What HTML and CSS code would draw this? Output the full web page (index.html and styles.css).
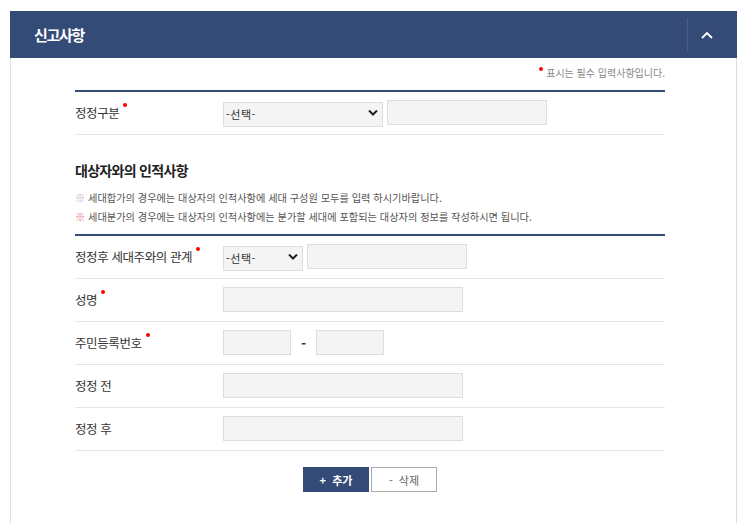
FILE: index.html
```html
<!DOCTYPE html>
<html lang="ko">
<head>
    <meta charset="UTF-8">
    <meta name="viewport" content="width=device-width, initial-scale=1.0">
    <title>신고사항</title>
    <link rel="stylesheet" href="styles.css">
</head>
<body>
    <div class="panel">
        <div class="panel-header">
            <h2>신고사항</h2>
            <button class="toggle-btn" type="button" aria-label="접기">
                <svg width="12" height="8" viewBox="0 0 12 8"><path d="M1 7 L6 2 L11 7" fill="none" stroke="#fff" stroke-width="1.8"/></svg>
            </button>
        </div>
        <div class="panel-body">
            <p class="required-info"><span class="req-dot"></span> 표시는 필수 입력사항입니다.</p>

            <div class="form-table">
                <div class="form-row">
                    <div class="form-label">정정구분<span class="req"></span></div>
                    <div class="form-field">
                        <div class="select-wrap w160">
                            <select><option>-선택-</option></select>
                            <svg class="arrow" width="10" height="7" viewBox="0 0 10 7"><path d="M1 1.5 L5 5.5 L9 1.5" fill="none" stroke="#222" stroke-width="2"/></svg>
                        </div>
                        <input type="text" class="input w160">
                    </div>
                </div>
            </div>

            <h3 class="section-title">대상자와의 인적사항</h3>
            <p class="guide"><span class="mark gray">※</span> 세대합가의 경우에는 대상자의 인적사항에 세대 구성원 모두를 입력 하시기바랍니다.</p>
            <p class="guide"><span class="mark">※</span> 세대분가의 경우에는 대상자의 인적사항에는 분가할 세대에 포함되는 대상자의 정보를 작성하시면 됩니다.</p>

            <div class="form-table">
                <div class="form-row">
                    <div class="form-label">정정후 세대주와의 관계<span class="req"></span></div>
                    <div class="form-field">
                        <div class="select-wrap w80">
                            <select><option>-선택-</option></select>
                            <svg class="arrow" width="10" height="7" viewBox="0 0 10 7"><path d="M1 1.5 L5 5.5 L9 1.5" fill="none" stroke="#222" stroke-width="2"/></svg>
                        </div>
                        <input type="text" class="input w160">
                    </div>
                </div>
                <div class="form-row">
                    <div class="form-label">성명<span class="req"></span></div>
                    <div class="form-field">
                        <input type="text" class="input w240">
                    </div>
                </div>
                <div class="form-row">
                    <div class="form-label">주민등록번호<span class="req"></span></div>
                    <div class="form-field">
                        <input type="text" class="input w68">
                        <span class="dash">-</span>
                        <input type="text" class="input w68">
                    </div>
                </div>
                <div class="form-row">
                    <div class="form-label">정정 전</div>
                    <div class="form-field">
                        <input type="text" class="input w240">
                    </div>
                </div>
                <div class="form-row">
                    <div class="form-label">정정 후</div>
                    <div class="form-field">
                        <input type="text" class="input w240">
                    </div>
                </div>
            </div>

            <div class="btn-area">
                <button type="button" class="btn btn-add">+&nbsp;&nbsp;추가</button>
                <button type="button" class="btn btn-del">-&nbsp;&nbsp;삭제</button>
            </div>
        </div>
    </div>
</body>
</html>
```

FILE: styles.css
```css
body {
    margin: 0;
    background: #fff;
    font-family: "Noto Sans CJK KR", "Noto Sans", sans-serif;
    color: #333;
}

.panel {
    margin: 11px 10px 0;
}

.panel-header {
    display: flex;
    align-items: center;
    justify-content: space-between;
    height: 47px;
    background: #344b77;
    padding-left: 24px;
}

.panel-header h2 {
    margin: 0;
    color: #fff;
    font-size: 15px;
    font-weight: bold;
    letter-spacing: -1.3px;
}

.toggle-btn {
    width: 50px;
    height: 33px;
    border: none;
    border-left: 1px solid #4a5d86;
    background: none;
    padding: 0 12px 0 0;
    display: flex;
    align-items: center;
    justify-content: center;
}

.panel-body {
    border: 1px solid #ddd;
    border-top: none;
    padding: 0 71px 40px 64px;
    min-height: 440px;
}

.required-info {
    margin: 0 0 10px;
    padding-top: 8px;
    line-height: 14px;
    text-align: right;
    font-size: 10px;
    color: #888;
}

.req-dot {
    display: inline-block;
    width: 4px;
    height: 4px;
    border-radius: 50%;
    background: #f00;
    vertical-align: 6px;
}

.form-table {
    border-top: 2px solid #344b77;
}

.form-row {
    display: flex;
    align-items: center;
    padding: 8px 0 9px;
    border-bottom: 1px solid #e6e6e6;
}

.form-label {
    width: 148px;
    flex-shrink: 0;
    font-size: 12.5px;
    letter-spacing: -0.4px;
    color: #333;
}

.req {
    display: inline-block;
    width: 4px;
    height: 4px;
    border-radius: 50%;
    background: #f00;
    vertical-align: 11px;
    margin-left: 4px;
}

.form-field {
    display: flex;
    align-items: center;
    gap: 4px;
}

.select-wrap {
    position: relative;
    height: 25px;
}

.select-wrap select {
    appearance: none;
    -webkit-appearance: none;
    width: 100%;
    height: 25px;
    border: 1px solid #ddd;
    background: #f4f4f4;
    font-family: inherit;
    font-size: 11px;
    letter-spacing: 0.5px;
    color: #333;
    padding: 0 2px;
    border-radius: 0;
    outline: none;
}

.select-wrap .arrow {
    position: absolute;
    right: 5px;
    top: 9px;
    pointer-events: none;
}

.input {
    box-sizing: border-box;
    height: 25px;
    border: 1px solid #ddd;
    background: #f4f4f4;
    padding: 0 4px;
    outline: none;
}

.w80 { width: 80px; }
.w160 { width: 160px; }
.w240 { width: 240px; }
.w68 { width: 68px; }

.dash {
    width: 17px;
    text-align: center;
    font-size: 14px;
    font-weight: bold;
    color: #333;
}

.section-title {
    margin: 25px 0 8px;
    font-size: 14px;
    line-height: 20px;
    font-weight: bold;
    letter-spacing: -0.7px;
    color: #222;
}

.guide {
    margin: 0;
    line-height: 19px;
    font-size: 10.2px;
    color: #555;
}

.guide:last-of-type {
    margin-bottom: 8px;
}

.mark {
    color: #e0707a;
}

.mark.gray {
    color: #b8a8c0;
}

.btn-area {
    display: flex;
    justify-content: center;
    gap: 2px;
    margin-top: 16px;
}

.btn {
    width: 66px;
    height: 25px;
    font-family: inherit;
    font-size: 11px;
    font-weight: bold;
    border-radius: 0;
    cursor: pointer;
}

.btn-add {
    background: #344b77;
    border: 1px solid #344b77;
    color: #fff;
}

.btn-del {
    background: #fff;
    border: 1px solid #aaa;
    color: #666;
    font-weight: normal;
}
```
